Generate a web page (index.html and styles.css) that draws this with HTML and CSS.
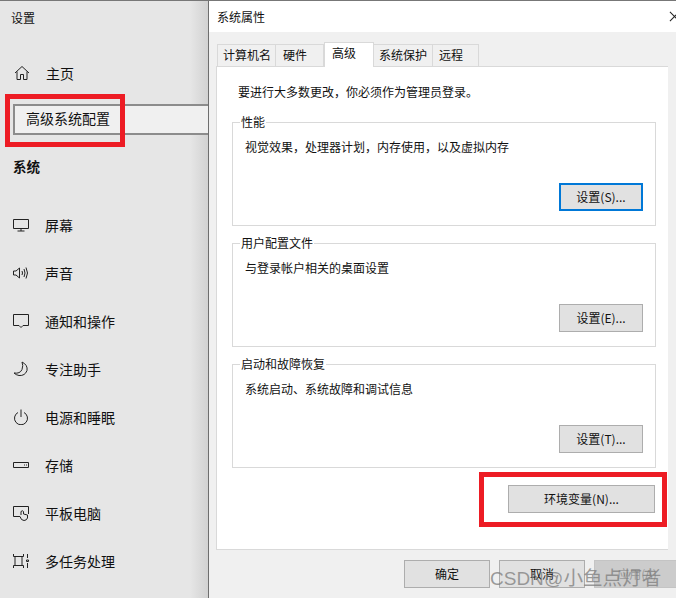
FILE: index.html
```html
<!DOCTYPE html>
<html lang="zh">
<head>
<meta charset="utf-8">
<title>系统属性</title>
<link rel="stylesheet" href="styles.css">
</head>
<body>
<div class="screen">
  <aside class="settings">
    <div class="app-title">设置</div>
    <div class="nav-row home">
      <svg class="icon" viewBox="0 0 16 16"><path d="M1 8 8 1.5 15 8M3 6.500V14.500H6.500V9.500H9.500V14.500H13V6.500"/></svg>
      <span>主页</span>
    </div>
    <div class="search">高级系统配置</div>
    <div class="section">系统</div>
    <div class="nav-row">
      <svg class="icon" viewBox="0 0 16 16"><path d="M.5 2.500H15.500V11.500H.5ZM8 11.500V14M4.500 14H11.500"/></svg>
      <span>屏幕</span>
    </div>
    <div class="nav-row">
      <svg class="icon" viewBox="0 0 16 16"><path d="M.5 6V10H3L6.500 13V3L3 6ZM9 6Q10 8 9 10M11 4Q13 8 11 12M13 2.500Q16 8 13 13.500"/></svg>
      <span>声音</span>
    </div>
    <div class="nav-row">
      <svg class="icon" viewBox="0 0 16 16"><path d="M.5 1.500H15.500V12.500H10L8 14.500 6 12.500H.5Z"/></svg>
      <span>通知和操作</span>
    </div>
    <div class="nav-row">
      <svg class="icon" viewBox="0 0 16 16"><path d="M9 1Q15 4 14 9.500 12 15 6 14.500 3 14 1 12 7 13 9 8.500 10.500 4.500 9 1Z"/></svg>
      <span>专注助手</span>
    </div>
    <div class="nav-row">
      <svg class="icon" viewBox="0 0 16 16"><path d="M5 3.500A6.500 6.500 0 1 0 11 3.500M8 .5V8"/></svg>
      <span>电源和睡眠</span>
    </div>
    <div class="nav-row">
      <svg class="icon" viewBox="0 0 16 16"><path d="M.5 5.500H15.500V10.500H.5ZM11 8H12M13 8H14"/></svg>
      <span>存储</span>
    </div>
    <div class="nav-row">
      <svg class="icon" viewBox="0 0 16 16"><path d="M7 11.500H.5V1.500H15.500V9M8 10V6.500Q9.500 5 10.500 6.500V9L14.500 10V13Q13.500 15.500 11 15.500 8 15.500 7 11.500"/></svg>
      <span>平板电脑</span>
    </div>
    <div class="nav-row">
      <svg class="icon" viewBox="0 0 16 16"><path d="M.5 1V3.500H10.500V1M.5 15V12.500H10.500V15M2 3.500V12.500M9 3.500V12.500M14.500 1V5M14.500 10V15M13.500 7H15.500V8.500H13.500Z"/></svg>
      <span>多任务处理</span>
    </div>
  </aside>

  <section class="dialog">
    <header class="titlebar">
      <span>系统属性</span>
      <svg class="close" viewBox="0 0 12 12"><path d="M1 1 11 11M11 1 1 11"/></svg>
    </header>
    <div class="body">
      <nav class="tabs">
        <span class="tab t1">计算机名</span>
        <span class="tab t2">硬件</span>
        <span class="tab t3 active">高级</span>
        <span class="tab t4">系统保护</span>
        <span class="tab t5">远程</span>
      </nav>
      <div class="panel">
        <p class="notice">要进行大多数更改，你必须作为管理员登录。</p>
        <fieldset class="group">
          <legend>性能</legend>
          <p>视觉效果，处理器计划，内存使用，以及虚拟内存</p>
          <button class="btn focus">设置(S)...</button>
        </fieldset>
        <fieldset class="group">
          <legend>用户配置文件</legend>
          <p>与登录帐户相关的桌面设置</p>
          <button class="btn">设置(E)...</button>
        </fieldset>
        <fieldset class="group">
          <legend>启动和故障恢复</legend>
          <p>系统启动、系统故障和调试信息</p>
          <button class="btn">设置(T)...</button>
        </fieldset>
        <div class="env-row"><button class="btn env">环境变量(N)...</button></div>
      </div>
      <footer class="actions">
        <button class="btn act">确定</button>
        <button class="btn act">取消</button>
        <button class="btn act disabled">应用(A)</button>
      </footer>
    </div>
  </section>

  <div class="mark mark-search"></div>
  <div class="mark mark-env"></div>
  <div class="watermark"><span class="wm-latin">CSDN @</span>小鱼点灯者</div>
</div>
</body>
</html>
```
FILE: styles.css
```css
* { box-sizing: border-box; }
html, body { margin: 0; padding: 0; }
body { font-family: "Noto Sans CJK SC", "Liberation Sans", sans-serif; font-size: 12px; color: #111; }
.screen { position: relative; display: flex; width: 676px; height: 598px; overflow: hidden; background: #e6e6e6; border-top: 1px solid #777; }

.settings { width: 208px; flex: none; display: flex; flex-direction: column; background: linear-gradient(to right, #e6e6e6 190px, #d2d2d2 208px); }
.app-title { height: 34px; padding: 9px 0 0 11px; line-height: 16px; }
.nav-row { height: 48px; display: flex; align-items: center; padding-left: 13px; gap: 16px; font-size: 14px; }
.nav-row span { line-height: 18px; }
.icon { width: 16px; height: 16px; fill: none; stroke: #222; stroke-width: 1; flex: none; }
.home { height: 30px; margin-top: 23px; padding-left: 14px; gap: 16px; }
.search { height: 31px; margin: 16px 0 0 13px; padding-left: 11px; border: 2px solid #8c8c8c; border-right: 0; background: #f0f0f0; font-size: 14px; line-height: 25px; }
.section { height: 34px; margin: 14px 0 18px; padding-left: 13px; font-size: 13.500px; font-weight: 700; line-height: 34px; }

.dialog { flex: 1; display: flex; flex-direction: column; border-left: 1px solid #6e6e6e; background: #f0f0f0; }
.titlebar { height: 31px; flex: none; display: flex; align-items: center; justify-content: space-between; padding: 0 0 0 8px; background: #fff; }
.close { width: 11px; height: 11px; fill: none; stroke: #222; stroke-width: 1.100; }
.body { flex: 1; display: flex; flex-direction: column; padding-left: 7px; }
.tabs { height: 34px; display: flex; align-items: flex-end; padding-left: 1px; }
.tab { height: 22px; border: 1px solid #d9d9d9; border-bottom: 0; border-left: 0; background: #f0f0f0; line-height: 20px; text-align: left; }
.t1 { width: 59px; padding-left: 5px; border-left: 1px solid #d9d9d9; }
.t2 { width: 48px; padding-left: 7px; }
.t3 { width: 50px; padding-left: 7px; }
.t4 { width: 59px; padding-left: 5px; }
.t5 { width: 46px; padding-left: 6px; }
.tab.active { height: 25px; margin-bottom: -1px; background: #fff; border-left: 1px solid #d9d9d9; position: relative; line-height: 20px; }
.panel { width: 452px; height: 484px; flex: none; padding: 0 15px; background: #fff; border: 1px solid #d9d9d9; border-right: 0; }
.notice { margin: 16px 0 14px 6px; line-height: 18px; }
.group { position: relative; height: 111px; margin: 0 0 10px; padding: 0; border: 1px solid #d9d9d9; width: 424px; }
.group legend { margin-left: 7px; padding: 0 1px; line-height: 14px; }
.group p { margin: 9px 0 0 12px; line-height: 18px; }
.btn { font: inherit; color: #111; background: #e1e1e1; border: 1px solid #adadad; padding: 0 0 2px; }
.group .btn { position: absolute; right: 12px; bottom: 14px; width: 84px; height: 28px; }
.btn.focus { border: 2px solid #0078d7; padding-bottom: 2px; }
.env-row { display: flex; justify-content: flex-end; margin-top: 17px; }
.env { width: 147px; height: 28px; margin-right: -2px; }
.actions { display: flex; gap: 9px; padding: 10px 0 0 188px; }
.act { width: 86px; height: 28px; }
.disabled { background: #ccc; border-color: #c4c4c4; color: #9a9a9a; }

.mark { position: absolute; border: 5px solid #ed1c24; }
.mark-search { left: 5px; top: 93px; width: 120px; height: 53px; }
.mark-env { left: 479px; top: 471px; width: 188px; height: 55px; }
.watermark { position: absolute; left: 490px; top: 562px; font-size: 19.600px; line-height: 28px; color: rgba(125,125,125,.75); white-space: nowrap; }
.wm-latin { font-family: "Liberation Sans", sans-serif; font-size: 19px; word-spacing: -5px; }
```
